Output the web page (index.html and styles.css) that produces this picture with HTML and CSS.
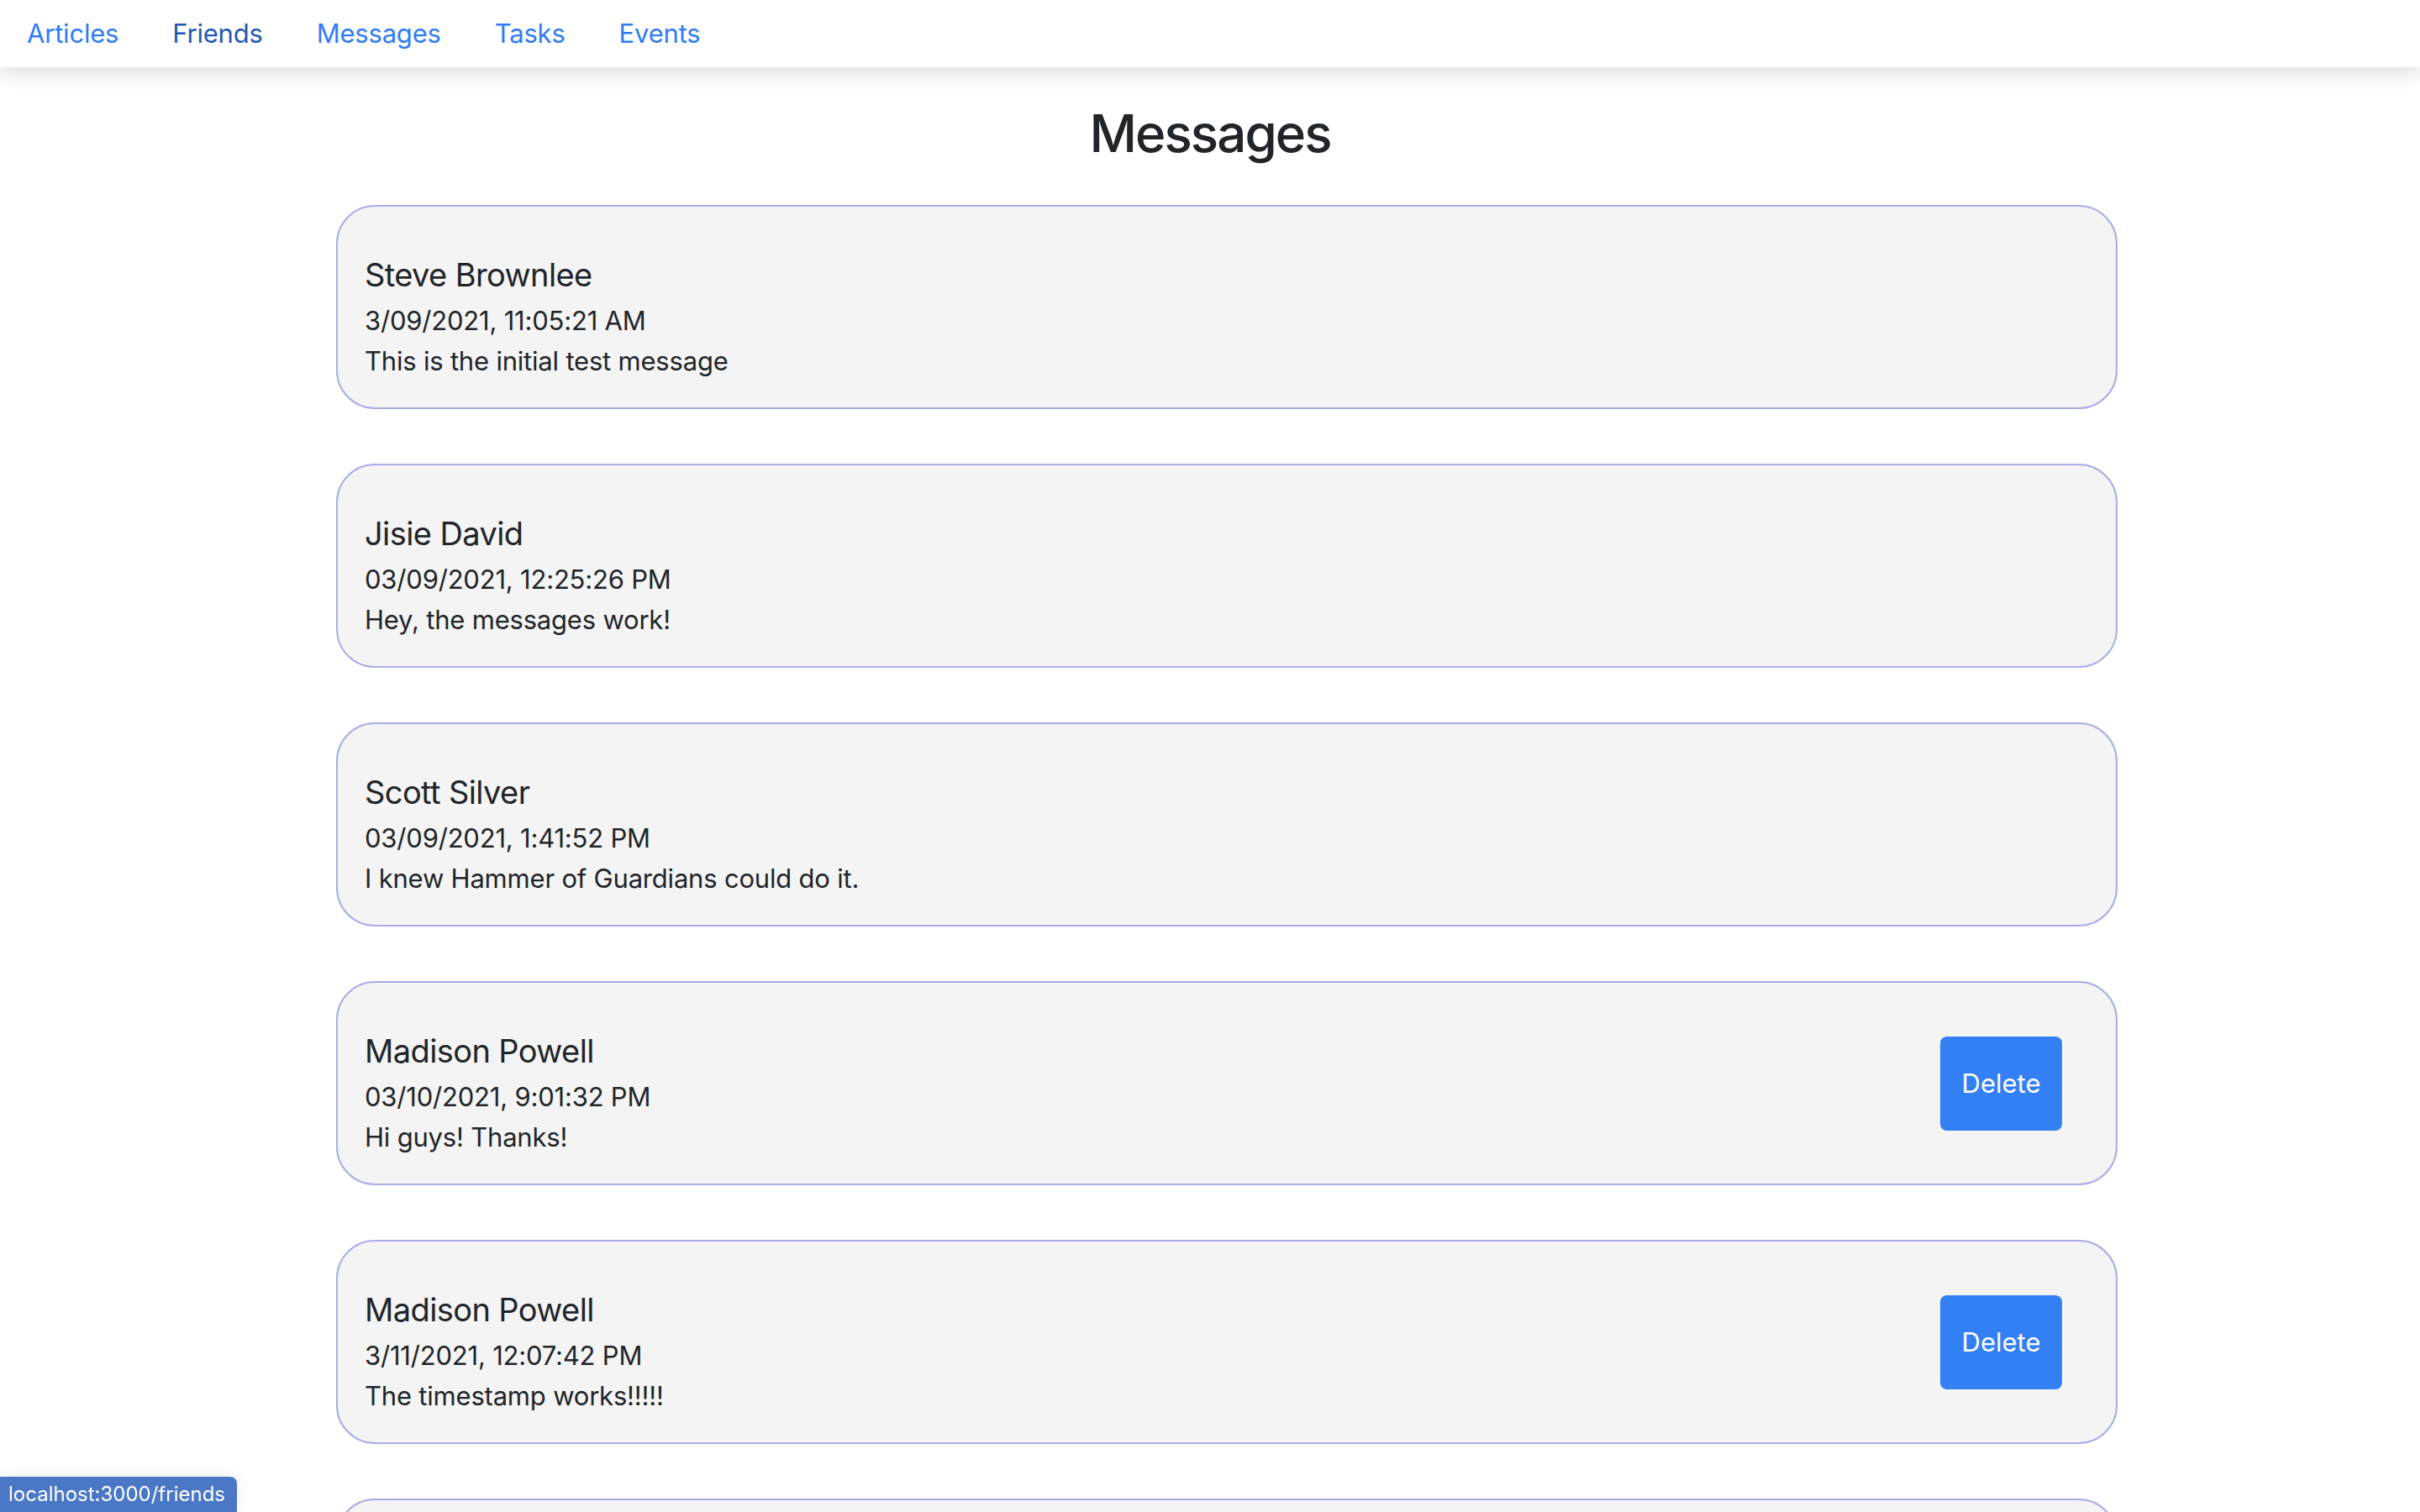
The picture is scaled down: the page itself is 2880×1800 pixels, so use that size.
FILE: index.html
```html
<!DOCTYPE html>
<html lang="en">
<head>
<meta charset="utf-8">
<title>Messages</title>
<link rel="stylesheet" href="styles.css">
</head>
<body>
<nav class="navbar">
  <a class="nav-link" href="#">Articles</a>
  <a class="nav-link nav-link--hover" href="#">Friends</a>
  <a class="nav-link" href="#">Messages</a>
  <a class="nav-link" href="#">Tasks</a>
  <a class="nav-link" href="#">Events</a>
</nav>
<main class="page">
  <h2 class="page-title">Messages</h2>
  <section class="message-list">
    <article class="message-card">
      <div class="message-body">
        <h5 class="message-name">Steve Brownlee</h5>
        <div class="message-date">3/09/2021, 11:05:21 AM</div>
        <div class="message-text">This is the initial test message</div>
      </div>
    </article>
    <article class="message-card">
      <div class="message-body">
        <h5 class="message-name">Jisie David</h5>
        <div class="message-date">03/09/2021, 12:25:26 PM</div>
        <div class="message-text">Hey, the messages work!</div>
      </div>
    </article>
    <article class="message-card">
      <div class="message-body">
        <h5 class="message-name">Scott Silver</h5>
        <div class="message-date">03/09/2021, 1:41:52 PM</div>
        <div class="message-text">I knew Hammer of Guardians could do it.</div>
      </div>
    </article>
    <article class="message-card">
      <div class="message-body">
        <h5 class="message-name">Madison Powell</h5>
        <div class="message-date">03/10/2021, 9:01:32 PM</div>
        <div class="message-text">Hi guys! Thanks!</div>
      </div>
      <button class="btn-delete" type="button">Delete</button>
    </article>
    <article class="message-card">
      <div class="message-body">
        <h5 class="message-name">Madison Powell</h5>
        <div class="message-date">3/11/2021, 12:07:42 PM</div>
        <div class="message-text">The timestamp works!!!!!</div>
      </div>
      <button class="btn-delete" type="button">Delete</button>
    </article>
    <article class="message-card message-card--partial"></article>
  </section>
</main>
<div class="status-bubble">localhost:3000/friends</div>
</body>
</html>
```

FILE: styles.css
```css
* { box-sizing: border-box; }

html, body {
  margin: 0;
  padding: 0;
  background: #ffffff;
}

body {
  font-family: Inter, "Noto Sans", "Liberation Sans", sans-serif;
  color: #212529;
  font-size: 32px;
  line-height: 48px;
}

.navbar {
  position: relative;
  z-index: 2;
  display: flex;
  align-items: center;
  height: 80px;
  background: #ffffff;
  box-shadow: 0 8px 22px rgba(0, 0, 0, 0.13);
}

.nav-link {
  padding: 0 32px;
  font-size: 31px;
  letter-spacing: -0.2px;
  line-height: 80px;
  color: #2f7cf6;
  text-decoration: none;
}

.nav-link--hover {
  color: #1f58b4;
}

.page {
  display: flex;
  flex-direction: column;
}

.page-title {
  margin: 40px 0 47px;
  text-align: center;
  font-size: 62px;
  font-weight: 500;
  letter-spacing: -2px;
  line-height: 77px;
  color: #212529;
}

.message-list {
  display: flex;
  flex-direction: column;
  gap: 65px;
  margin-left: 400px;
  width: 2120px;
}

.message-card {
  display: flex;
  align-items: center;
  justify-content: space-between;
  min-height: 243px;
  padding: 57px 64px 31px 32px;
  background: #f4f4f4;
  border: 2px solid #a9ade6;
  border-radius: 46px;
}

.message-body {
  display: flex;
  flex-direction: column;
  align-self: flex-start;
}

.message-name {
  margin: 0 0 7px;
  font-size: 38px;
  font-weight: 400;
  letter-spacing: -0.6px;
  line-height: 48px;
}

.message-date,
.message-text {
  font-size: 31px;
  letter-spacing: -0.2px;
  line-height: 48px;
}

.btn-delete {
  width: 145px;
  height: 112px;
  margin-top: -26px;
  border: none;
  border-radius: 8px;
  background: #3380f4;
  color: #ffffff;
  font-family: inherit;
  font-size: 31px;
  line-height: 48px;
  cursor: pointer;
}

.status-bubble {
  position: fixed;
  left: 0;
  bottom: 0;
  height: 42px;
  padding: 0 14px 0 10px;
  background: #4b78c6;
  color: #ffffff;
  font-size: 24px;
  line-height: 42px;
  border-top-right-radius: 8px;
  box-shadow: 0 0 20px rgba(0, 0, 0, 0.08);
}
```
